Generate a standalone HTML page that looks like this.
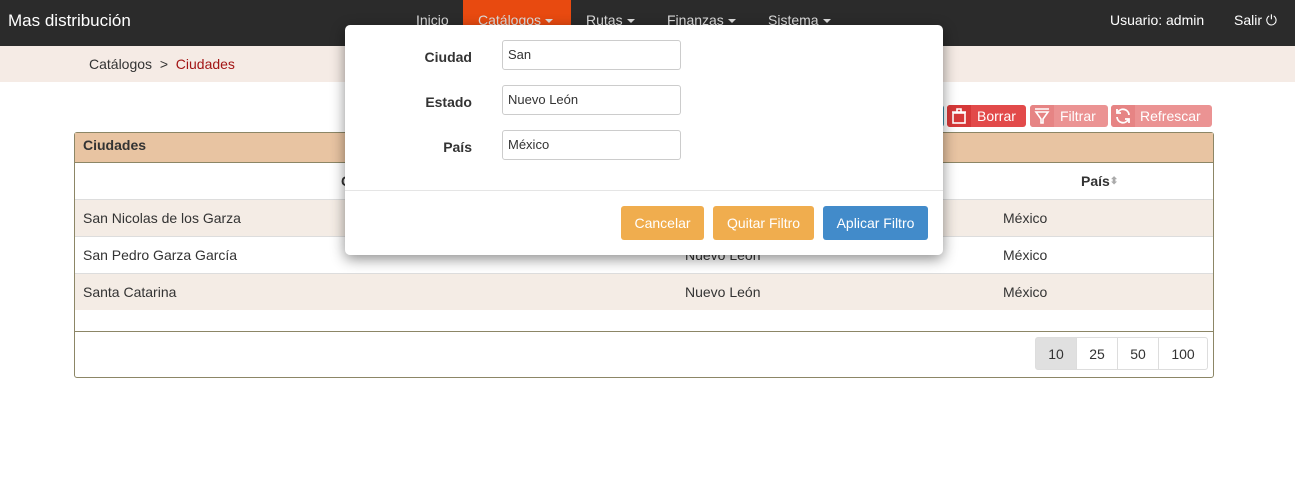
<!DOCTYPE html>
<html><head><meta charset="utf-8"><style>
body{margin:0;width:1295px;height:479px;background:#fff;font-family:"Liberation Sans",sans-serif;font-size:14px;color:#333;position:relative;overflow:hidden}
.nav{position:absolute;left:0;top:0;width:1295px;height:46px;background:#2b2b2b;color:#fff}
.nav span{position:absolute;top:12px;font-size:14px;color:#ddd}
.caret{display:inline-block;border-top:4px solid #ddd;border-left:4px solid transparent;border-right:4px solid transparent;vertical-align:middle;margin-left:4px}
.bc{position:absolute;top:46px;left:0;width:1295px;height:36px;background:#f5ebe5}
.btn{position:absolute;top:105px;height:22px;border-radius:3px;color:#fff;font-size:14px;line-height:22px}
.btn i{position:absolute;left:0;top:0;width:24px;height:22px;border-radius:3px 0 0 3px}
.btn svg{position:absolute;left:3px;top:2px}
.panel{position:absolute;left:74px;top:132px;width:1138px;height:244px;border:1px solid #8c8666;border-radius:3px}
.row{position:absolute;left:0;width:1138px;height:37px;line-height:37px;box-sizing:border-box}
.row span{position:absolute}
.modal{position:absolute;left:345px;top:25px;width:598px;height:230px;background:#fff;border-radius:5px;box-shadow:0 4px 14px rgba(0,0,0,.45)}
.lbl{position:absolute;width:127px;text-align:right;font-weight:bold;font-size:14px}
.inp{position:absolute;left:157px;border:1px solid #ccc;border-radius:3px;font-size:13px;line-height:28px;padding-left:5px;box-sizing:border-box;width:179px;height:30px}
.mb{position:absolute;top:181px;height:34px;line-height:34px;border-radius:3px;color:#fff;text-align:center;font-size:14px}
.pg{position:absolute;top:337px;height:33px;line-height:33px;border:1px solid #ddd;text-align:center;font-size:14px;box-sizing:border-box}
</style></head><body>
<div class="nav">
<span style="left:8px;top:11px;font-size:17px;color:#fff">Mas distribución</span>
<div style="position:absolute;left:463px;top:0;width:108px;height:46px;background:#e84a10"></div>
<span style="left:416px">Inicio</span>
<span style="left:478px">Catálogos<b class="caret"></b></span>
<span style="left:586px">Rutas<b class="caret"></b></span>
<span style="left:667px">Finanzas<b class="caret"></b></span>
<span style="left:768px">Sistema<b class="caret"></b></span>
<span style="left:1110px;color:#fff">Usuario: admin</span>
<span style="left:1234px;color:#fff">Salir ⏻</span>
</div>
<div class="bc"><span style="position:absolute;left:89px;top:10px">Catálogos &nbsp;&gt;&nbsp; <span style="color:#a31515">Ciudades</span></span></div>
<div class="btn" style="left:936px;width:8px;background:#3a8ea8"></div>
<div class="btn" style="left:947px;width:79px;background:#e24a4a"><i style="background:#d63838"></i><svg width="18" height="18" viewBox="0 0 18 18" fill="none" stroke="#fff" stroke-width="1.6"><rect x="3" y="6" width="12" height="10"/><path d="M2 5h14M7 5V2h4v3"/></svg><span style="position:absolute;left:30px">Borrar</span></div>
<div class="btn" style="left:1030px;width:78px;background:#eb9393"><i style="background:#e68484"></i><svg width="18" height="18" viewBox="0 0 18 18" fill="none" stroke="#fff" stroke-width="1.6"><path d="M2 2h14M3 5h12l-5 7v4H8v-4z"/></svg><span style="position:absolute;left:30px">Filtrar</span></div>
<div class="btn" style="left:1111px;width:101px;background:#eb9393"><i style="background:#e68484"></i><svg width="18" height="18" viewBox="0 0 18 18" fill="none" stroke="#fff" stroke-width="1.8"><path d="M15 8A6 6 0 0 0 4 5M3 10a6 6 0 0 0 11 3"/><path d="M3 2v4h4M15 16v-4h-4"/></svg><span style="position:absolute;left:29px">Refrescar</span></div>
<div class="panel">
<div class="row" style="top:0;height:30px;line-height:25px;background:#e8c4a2;border-bottom:1px solid #8c8666;font-weight:bold"><span style="left:8px">Ciudades</span></div>
<div class="row" style="top:30px;font-weight:bold"><span style="left:266px">C</span><span style="left:1006px">País <span style="color:#aaa;font-size:10px">⬍</span></span></div>
<div class="row" style="top:66px;background:#f4ece5;border-top:1px solid #ddd"><span style="left:8px">San Nicolas de los Garza</span><span style="left:610px">Nuevo León</span><span style="left:928px">México</span></div>
<div class="row" style="top:103px;border-top:1px solid #ddd"><span style="left:8px">San Pedro Garza García</span><span style="left:610px">Nuevo León</span><span style="left:928px">México</span></div>
<div class="row" style="top:140px;background:#f4ece5;border-top:1px solid #ddd"><span style="left:8px">Santa Catarina</span><span style="left:610px">Nuevo León</span><span style="left:928px">México</span></div>
<div style="position:absolute;left:0;top:198px;width:1138px;border-top:1px solid #8c8666"></div>
</div>
<div class="pg" style="left:1035px;width:42px;background:#e0e0e0;border-radius:3px 0 0 3px">10</div>
<div class="pg" style="left:1076px;width:42px">25</div>
<div class="pg" style="left:1117px;width:42px">50</div>
<div class="pg" style="left:1158px;width:50px;border-radius:0 3px 3px 0">100</div>
<div class="modal">
<div class="lbl" style="top:24px">Ciudad</div><div class="inp" style="top:15px">San</div>
<div class="lbl" style="top:69px">Estado</div><div class="inp" style="top:60px">Nuevo León</div>
<div class="lbl" style="top:114px">País</div><div class="inp" style="top:105px">México</div>
<div style="position:absolute;left:0;top:165px;width:598px;border-top:1px solid #e5e5e5"></div>
<div class="mb" style="left:276px;width:83px;background:#f0ad4e">Cancelar</div>
<div class="mb" style="left:368px;width:101px;background:#f0ad4e">Quitar Filtro</div>
<div class="mb" style="left:478px;width:105px;background:#428bca">Aplicar Filtro</div>
</div>
</body></html>
